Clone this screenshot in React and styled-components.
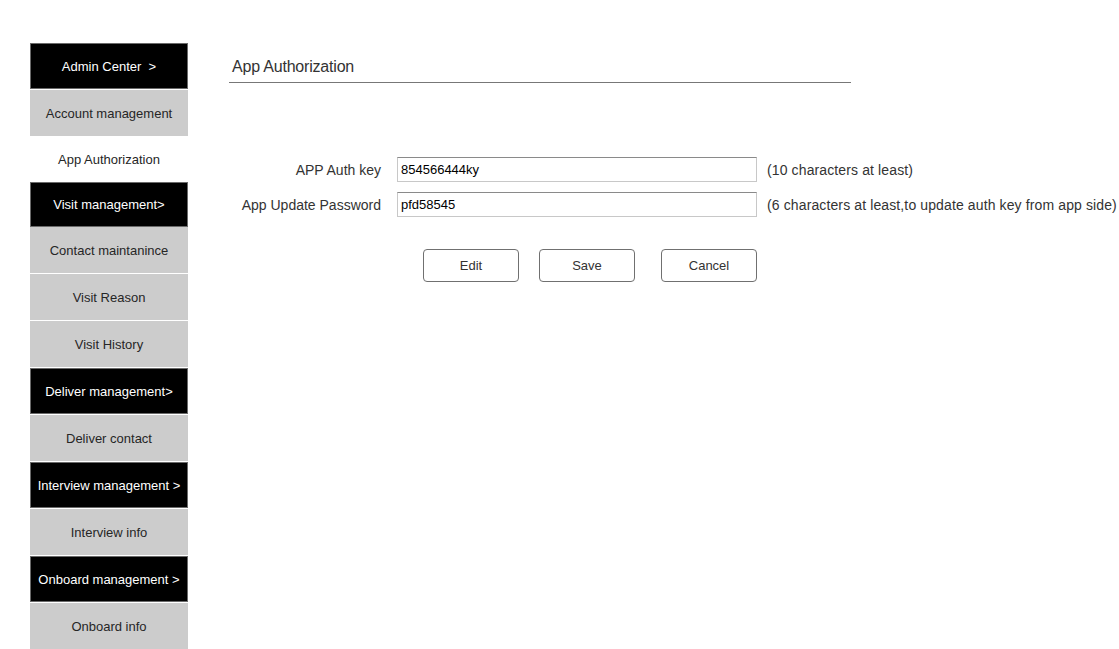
import React from 'react';
import styled, { createGlobalStyle } from 'styled-components';

const GlobalStyle = createGlobalStyle`
  html, body {
    margin: 0;
    padding: 0;
    background: #fff;
    font-family: "Liberation Sans", Arial, sans-serif;
  }
`;

const Page = styled.div`
  display: flex;
  align-items: flex-start;
  padding: 43px 0 0 30px;
  gap: 41px;
`;

const Sidebar = styled.nav`
  display: flex;
  flex-direction: column;
  width: 158px;
  flex-shrink: 0;
`;

const NavItem = styled.div`
  box-sizing: border-box;
  height: ${p => p.$height || 46}px;
  margin-bottom: ${p => (p.$flush ? 0 : 1)}px;
  display: flex;
  align-items: center;
  justify-content: center;
  font-size: 13px;
  white-space: pre;
  background: ${p => (p.$section ? '#000' : p.$current ? '#fff' : '#cccccc')};
  color: ${p => (p.$section ? '#fff' : '#262626')};
  border: ${p => (p.$section ? '1px solid #6a6a6a' : 'none')};
`;

const Main = styled.main`
  width: 622px;
`;

const Heading = styled.h2`
  box-sizing: border-box;
  margin: 0;
  height: 40px;
  display: flex;
  align-items: flex-end;
  padding: 0 0 6px 3px;
  font-size: 16px;
  font-weight: normal;
  color: #333;
  letter-spacing: -0.2px;
  border-bottom: 1px solid #777;
`;

const Form = styled.div`
  display: grid;
  grid-template-columns: 152px 360px auto;
  column-gap: 16px;
  row-gap: 10px;
  margin-top: 74px;
  align-items: center;
`;

const Label = styled.label`
  text-align: right;
  font-size: 14px;
  color: #333;
  white-space: nowrap;
`;

const Input = styled.input`
  box-sizing: border-box;
  width: 360px;
  height: 25px;
  padding: 0 3px;
  font-family: "Liberation Sans", Arial, sans-serif;
  font-size: 13px;
  color: #000;
  background: #fff;
  border: 1px solid #c8c8c8;
  border-top-color: #8a8a8a;
  outline: none;
`;

const Hint = styled.span`
  margin-left: -6px;
  font-size: 14px;
  letter-spacing: 0.12px;
  color: #333;
  white-space: nowrap;
`;

const Buttons = styled.div`
  display: flex;
  margin: 32px 0 0 194px;
`;

const Button = styled.button`
  box-sizing: border-box;
  width: 96px;
  height: 33px;
  margin-left: ${p => p.$offset || 0}px;
  font-family: "Liberation Sans", Arial, sans-serif;
  font-size: 13px;
  color: #333;
  background: #fff;
  border: 1px solid #707070;
  border-radius: 4px;
`;

const nav = [
  { label: 'Admin Center  >', section: true },
  { label: 'Account management' },
  { label: 'App Authorization', current: true, height: 45, flush: true },
  { label: 'Visit management>', section: true, height: 45, flush: true },
  { label: 'Contact maintanince' },
  { label: 'Visit Reason' },
  { label: 'Visit History' },
  { label: 'Deliver management>', section: true },
  { label: 'Deliver contact' },
  { label: 'Interview management >', section: true },
  { label: 'Interview info' },
  { label: 'Onboard management >', section: true },
  { label: 'Onboard info' },
];

export default function App() {
  return (
    <>
      <GlobalStyle />
      <Page>
        <Sidebar>
          {nav.map(item => (
            <NavItem
              key={item.label}
              $section={item.section}
              $current={item.current}
              $height={item.height}
              $flush={item.flush}
            >
              {item.label}
            </NavItem>
          ))}
        </Sidebar>
        <Main>
          <Heading>App Authorization</Heading>
          <Form>
            <Label>APP Auth key</Label>
            <Input defaultValue="854566444ky" />
            <Hint>(10 characters at least)</Hint>
            <Label>App Update Password</Label>
            <Input defaultValue="pfd58545" />
            <Hint>(6 characters at least,to update auth key from app side)</Hint>
          </Form>
          <Buttons>
            <Button>Edit</Button>
            <Button $offset={20}>Save</Button>
            <Button $offset={26}>Cancel</Button>
          </Buttons>
        </Main>
      </Page>
    </>
  );
}
